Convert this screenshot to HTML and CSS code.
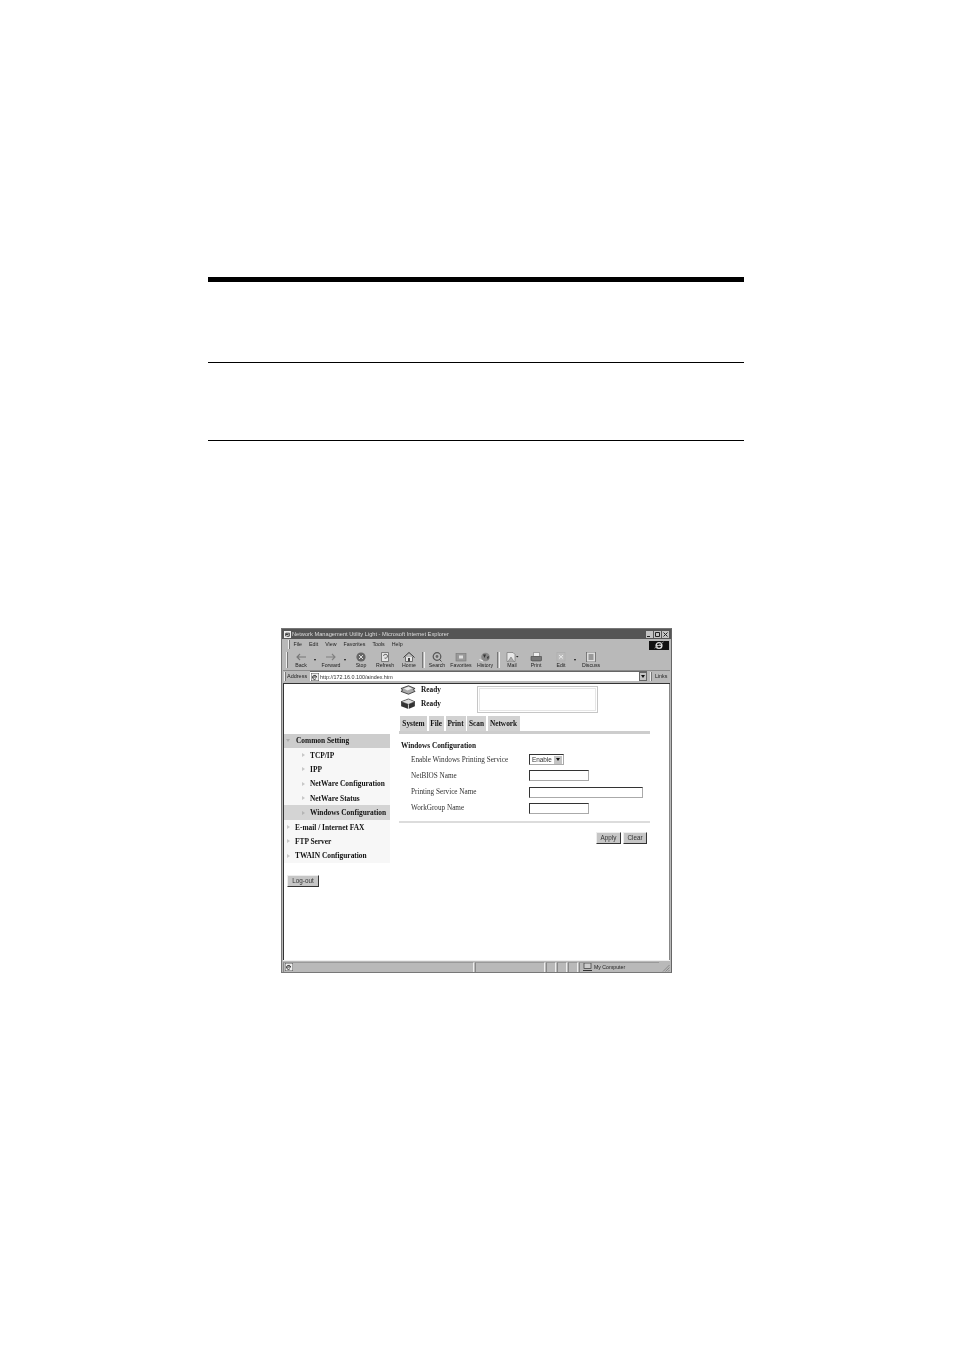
FILE: index.html
```html
<!DOCTYPE html>
<html lang="en">
<head>
<meta charset="utf-8">
<title>Windows Configuration</title>
<link rel="stylesheet" href="styles.css">
</head>
<body>
<main class="page">
  <div class="rule-thick"></div>
  <div class="rule rule-a"></div>
  <div class="rule rule-b"></div>

  <section class="window">
    <header class="titlebar">
      <svg class="ti" viewBox="0 0 8 8"><rect width="8" height="8" fill="#eee"/><path d="M2 6V2.5h3.5M2 4h3M6 2v4H3" stroke="#222" fill="none"/></svg>
      <span class="title-text">Network Management Utility Light - Microsoft Internet Explorer</span>
      <span class="wbtns">
        <span class="wbtn"><svg viewBox="0 0 7 7"><path d="M1 5.500h3" stroke="#222"/></svg></span>
        <span class="wbtn"><svg viewBox="0 0 7 7"><path d="M1.500 1.500h4v4h-4z" fill="none" stroke="#222"/></svg></span>
        <span class="wbtn"><svg viewBox="0 0 7 7"><path d="M1.500 1.500l4 4M5.500 1.500l-4 4" stroke="#222"/></svg></span>
      </span>
    </header>

    <nav class="menubar">
      <span class="grip menu-grip"></span>
      <span>File</span><span>Edit</span><span>View</span><span>Favorites</span><span>Tools</span><span>Help</span>
      <span class="throbber"><svg viewBox="0 0 12 10" width="12" height="9"><circle cx="6" cy="5" r="3.200" fill="none" stroke="#ddd" stroke-width="1.600"/><path d="M3 5h6" stroke="#ddd"/><path d="M1 8C3 7 8 3 11 1" stroke="#999" fill="none"/></svg></span>
    </nav>

    <div class="toolbar">
      <span class="grip tall"></span>
      <span class="tool"><svg viewBox="0 0 14 10"><path d="M12 5H3M6 2 3 5l3 3" fill="none" stroke="#777" stroke-width="1.100"/></svg><b>Back</b></span>
      <i class="drop"></i>
      <span class="tool"><svg viewBox="0 0 14 10"><path d="M2 5h9M8 2l3 3-3 3" fill="none" stroke="#808080" stroke-width="1.100"/></svg><b>Forward</b></span>
      <i class="drop"></i>
      <span class="tool"><svg viewBox="0 0 14 10"><circle cx="7" cy="5" r="4.600" fill="#666"/><path d="M5 3l4 4M9 3 5 7" stroke="#ddd"/></svg><b>Stop</b></span>
      <span class="tool"><svg viewBox="0 0 14 10"><path d="M3.500.5h7v9h-7z" fill="#e4e4e4" stroke="#666" stroke-width=".8"/><path d="M5.500 4a2 2 0 1 1 1 2" fill="none" stroke="#666"/></svg><b>Refresh</b></span>
      <span class="tool"><svg viewBox="0 0 14 10"><path d="M1.500 5.500 7 .5l5.500 5" fill="none" stroke="#333"/><path d="M3.500 5v4.500h7V5" fill="#e4e4e4" stroke="#555" stroke-width=".8"/><rect x="6" y="6" width="2" height="3.500" fill="#444"/></svg><b>Home</b></span>
      <span class="sep sep-first"></span>
      <span class="tool"><svg viewBox="0 0 14 10"><circle cx="7" cy="4.500" r="3.800" fill="#bbb" stroke="#555" stroke-width="1.200"/><circle cx="7" cy="4.500" r="1.400" fill="#666"/><path d="M9.500 7.500l2 2" stroke="#444"/></svg><b>Search</b></span>
      <span class="tool"><svg viewBox="0 0 14 10"><rect x="2" y="1.500" width="10" height="7.500" fill="#999" stroke="#777" stroke-width=".6"/><rect x="5" y="3.500" width="4" height="3" fill="#ddd"/></svg><b>Favorites</b></span>
      <span class="tool"><svg viewBox="0 0 14 10"><circle cx="7.500" cy="5" r="4.300" fill="#888"/><path d="M5 2.500h3L6.500 6zM9 5l2-1-1 4z" fill="#333"/><path d="M1.500 7.500 5 9" stroke="#eee"/></svg><b>History</b></span>
      <span class="sep"></span>
      <span class="tool"><svg viewBox="0 0 14 10"><path d="M2 .5h6l2 2v7H2z" fill="#e8e8e8" stroke="#777" stroke-width=".7"/><path d="M3 9.500 6 5l3 4.500" fill="#aaa" stroke="#666" stroke-width=".5"/><path d="M11 4h2.500l-1.200 1.500z" fill="#222"/></svg><b>Mail</b></span>
      <span class="tool"><svg viewBox="0 0 14 10"><path d="M4.500.5h6v4h-6z" fill="#eee" stroke="#777" stroke-width=".6"/><path d="M2 4.500h10.500v4H2z" fill="#777" stroke="#444" stroke-width=".6"/><path d="M3 9.500h9" stroke="#999"/></svg><b>Print</b></span>
      <span class="tool tool-edit"><svg viewBox="0 0 14 10"><rect x="3" y=".5" width="8" height="8.500" fill="#bbb" stroke="#aaa" stroke-width=".6"/><path d="M5 3l4 3.500M9 3 5 6.500" stroke="#eee"/></svg><b>Edit</b></span>
      <i class="drop"></i>
      <span class="tool"><svg viewBox="0 0 14 10"><rect x="2.500" y="0" width="9" height="10" fill="#ddd" stroke="#666" stroke-width=".8"/><rect x="4.500" y="2" width="5" height="6" fill="#999"/></svg><b>Discuss</b></span>
    </div>

    <div class="addressbar">
      <span class="grip"></span>
      <span class="addr-label">Address</span>
      <span class="addr-field">
        <svg class="page-ico" viewBox="0 0 8 8"><rect width="8" height="8" fill="#eee" stroke="#333" stroke-width=".8"/><path d="M2 4h4M5.500 4a2 2 0 1 0-.6 1.800" stroke="#111" fill="none" stroke-width=".8"/></svg>
        <span class="addr-url">http://172.16.0.100/aindex.htm</span>
        <span class="scroll-btn"></span>
      </span>
      <span class="grip links-grip"></span>
      <span class="links">Links</span>
    </div>

    <div class="content">
      <aside class="sidebar">
        <ul class="tree">
          <li class="node head"><i class="tri down"></i>Common Setting</li>
          <li class="node sub"><i class="tri"></i>TCP/IP</li>
          <li class="node sub"><i class="tri"></i>IPP</li>
          <li class="node sub"><i class="tri"></i>NetWare Configuration</li>
          <li class="node sub"><i class="tri"></i>NetWare Status</li>
          <li class="node sub active"><i class="tri"></i>Windows Configuration</li>
          <li class="node"><i class="tri"></i>E-mail / Internet FAX</li>
          <li class="node"><i class="tri"></i>FTP Server</li>
          <li class="node"><i class="tri"></i>TWAIN Configuration</li>
        </ul>
        <button class="btn logout" type="button">Log-out</button>
      </aside>

      <div class="main">
        <div class="status">
          <div class="status-lines">
            <div class="ready"><svg viewBox="0 0 17 10"><path d="M1 4 9 1l7 3-2 1 2 2-7 3-8-3 2-1.500z" fill="#aaa" stroke="#222" stroke-width=".8"/><path d="M4 4l5-2 4 2-5 2z" fill="#eee"/></svg>Ready</div>
            <div class="ready"><svg viewBox="0 0 17 12"><path d="M1 4 9 1l7 3v5l-7 3-8-3z" fill="#333"/><path d="M1 4 9 1l7 3-7 3z" fill="#ddd" stroke="#222" stroke-width=".6"/><path d="M9 7v5" stroke="#ddd"/></svg>Ready</div>
          </div>
          <div class="msgbox"></div>
        </div>

        <div class="tabs">
          <span class="tab">System</span><span class="tab">File</span><span class="tab">Print</span><span class="tab">Scan</span><span class="tab">Network</span>
        </div>

        <h2 class="section-title">Windows Configuration</h2>
        <form class="form">
          <div class="row"><label>Enable Windows Printing Service</label><span class="select">Enable<i class="select-arrow"></i></span></div>
          <div class="row"><label>NetBIOS Name</label><span class="input short"></span></div>
          <div class="row"><label>Printing Service Name</label><span class="input long"></span></div>
          <div class="row"><label>WorkGroup Name</label><span class="input short"></span></div>
        </form>
        <div class="divider"></div>
        <div class="actions">
          <button class="btn apply" type="button">Apply</button>
          <button class="btn clear" type="button">Clear</button>
        </div>
      </div>
    </div>

    <footer class="statusbar">
      <span class="sb sb-main"><svg class="page-ico" viewBox="0 0 8 8"><rect width="8" height="8" fill="#eee" stroke="#333" stroke-width=".8"/><path d="M2 4h4M5.500 4a2 2 0 1 0-.6 1.800" stroke="#111" fill="none" stroke-width=".8"/></svg></span>
      <span class="sb sb-2"></span><span class="sb sb-3"></span><span class="sb sb-3"></span><span class="sb sb-3"></span>
      <span class="sb sb-zone"><svg viewBox="0 0 9 8" width="9" height="8"><rect x="1" y="0" width="7" height="5.500" fill="#ccc" stroke="#333" stroke-width=".7"/><path d="M0 7.500h9" stroke="#333"/></svg>My Computer</span>
      <svg class="resize" viewBox="0 0 8 8"><path d="M7.500 1 1 7.500M7.500 3.500 3.500 7.500M7.500 6 6 7.500" stroke="#888" fill="none"/></svg>
    </footer>
  </section>
</main>
</body>
</html>
```

FILE: styles.css
```css
* { box-sizing: border-box; }
html, body { margin: 0; padding: 0; background: #fff; }
.page {
  width: 954px;
  height: 1348px;
  padding-top: 277px;
  display: flex;
  flex-direction: column;
  overflow: hidden;
}
.rule-thick { width: 536px; height: 5px; margin-left: 208px; background: #000; }
.rule { width: 536px; height: 1px; margin-left: 208px; background: #000; }
.rule-a { margin-top: 80px; }
.rule-b { margin-top: 77px; }

.window {
  width: 391px;
  height: 345px;
  margin: 187px 0 0 281px;
  border: 1px solid #777;
  border-right-color: #666;
  background: #b9b9b9;
  padding: 0 1px;
  display: flex;
  flex-direction: column;
  font-family: "Liberation Sans", Arial, sans-serif;
  color: #222;
  filter: grayscale(1) blur(.4px);
}
.titlebar {
  height: 10px;
  flex: none;
  margin: 0 -1px;
  background: #555;
  display: flex;
  align-items: center;
  padding: 0 2px;
  gap: 1px;
}
.ti { width: 7px; height: 7px; flex: none; }
.title-text { font-size: 5.700px; color: #ddd; white-space: nowrap; }
.wbtns { margin-left: auto; display: flex; }
.wbtn {
  width: 7px;
  height: 7px;
  margin-left: 1px;
  background: #c4c4c4;
  display: block;
}
.wbtn svg { width: 7px; height: 7px; display: block; }
.menubar {
  height: 11px;
  flex: none;
  display: flex;
  align-items: center;
  gap: 7px;
  font-size: 5.300px;
  padding-left: 5px;
}
.menubar > span:not(.throbber):not(.grip) { position: relative; top: -1px; }
.grip { width: 2px; height: 9px; flex: none; border-left: 1px solid #eee; border-right: 1px solid #777; }
.menu-grip { margin-right: -3.500px; }
.grip.tall { height: 16px; margin: 0 1px 0 2px; }
.throbber {
  margin-left: auto;
  margin-right: 1px;
  align-self: flex-end;
  width: 20px;
  height: 9px;
  background: #111;
  display: flex;
  justify-content: center;
}
.toolbar {
  height: 21px;
  flex: none;
  display: flex;
  align-items: center;
  padding-left: 1px;
  border-bottom: 1px solid #8a8a8a;
}
.tool {
  width: 24px;
  flex: none;
  display: flex;
  flex-direction: column;
  align-items: center;
}
.tool-edit { margin-left: 1px; }
.tool svg { width: 14px; height: 10px; display: block; }
.tool b { font-weight: 400; font-size: 5.200px; line-height: 7px; white-space: nowrap; }
.drop { width: 6px; height: 2px; flex: none; position: relative; }
.drop::after { content: ""; position: absolute; left: 1px; top: 0; border: 1.500px solid transparent; border-top: 2px solid #111; border-bottom: 0; }
.sep { width: 3px; height: 16px; flex: none; border-left: 1px solid #777; border-right: 1px solid #eee; }
.sep-first { margin-left: 1px; }
.addressbar {
  height: 13px;
  flex: none;
  display: flex;
  align-items: center;
  padding: 0 0 2px 1px;
  font-size: 5.500px;
  border-bottom: 1px solid #333;
}
.addr-label { width: 24px; padding-left: 1px; flex: none; }
.addr-field {
  width: 337px;
  height: 10px;
  flex: none;
  background: #fff;
  display: flex;
  align-items: center;
  gap: 1px;
  border-top: 1px solid #666;
}
.page-ico { width: 8px; height: 8px; flex: none; margin-left: 1px; }
.addr-url { font-size: 5.400px; color: #333; white-space: nowrap; }
.scroll-btn {
  margin-left: auto;
  width: 8px;
  height: 9px;
  background: #c4c4c4;
  border: 1px solid #666;
  position: relative;
}
.scroll-btn::after { content: ""; position: absolute; left: 1px; top: 2px; border: 2px solid transparent; border-top: 3px solid #111; border-bottom: 0; }
.links-grip { margin-left: 3px; }
.links { margin-left: 3px; font-size: 5.300px; }
.content {
  height: 276px;
  flex: none;
  background: #fff;
  border-left: 1px solid #333;
  border-right: 1px solid #888;
  display: flex;
  font-family: "Liberation Serif", "Times New Roman", serif;
  color: #111;
}
.sidebar { width: 106px; flex: none; padding-top: 49.500px; }
.tree { list-style: none; margin: 0; padding: 0; }
.node {
  height: 14.400px;
  display: flex;
  align-items: center;
  gap: 5px;
  padding-left: 3px;
  background: #f7f7f7;
  font-size: 7.400px;
  font-weight: 700;
  white-space: nowrap;
}
.node.head { background: #cdcdcd; padding-left: 2px; gap: 6px; }
.node.sub { padding-left: 18px; }
.node.active { background: #d4d4d4; }
.tri {
  width: 0;
  height: 0;
  flex: none;
  border: 2px solid transparent;
  border-left: 3px solid #c8c8c8;
  border-right: 0;
}
.node.active .tri { border-left-color: #b4b4b4; }
.tri.down { border: 2.500px solid transparent; border-top: 3px solid #aaa; border-bottom: 0; }
.btn {
  display: block;
  padding: 0;
  background: #c6c6c6;
  border: 1px solid;
  border-color: #eee #333 #333 #eee;
  font-family: "Liberation Sans", Arial, sans-serif;
  font-size: 6.300px;
  color: #333;
  height: 12px;
}
.logout { width: 32px; margin: 11.500px 0 0 3px; }
.main { flex: 1; padding: 0 0 0 9px; min-width: 0; }
.status { display: flex; height: 31px; padding-top: 2px; }
.status-lines { width: 78px; flex: none; margin-top: -4px; }
.ready {
  height: 14px;
  display: flex;
  align-items: center;
  gap: 5px;
  padding-left: 1px;
  font-size: 7.300px;
  font-weight: 700;
}
.ready svg { width: 16px; height: 11px; flex: none; }
.msgbox {
  width: 121px;
  height: 27px;
  border: 1px solid #c6c6c6;
  outline: 1px solid #e6e6e6;
  outline-offset: -3px;
}
.tabs {
  display: grid;
  grid-template-columns: 27px 15.500px 20px 19px 32px;
  gap: 1.500px;
  width: 251px;
  border-bottom: 3px solid #cdcdcd;
  height: 18px;
  margin-top: 1px;
  padding-left: 1px;
}
.tab {
  height: 15px;
  background: #d2d2d2;
  font-size: 7.300px;
  font-weight: 700;
  line-height: 15px;
  text-align: center;
  white-space: nowrap;
}
.section-title { margin: 7px 0 0 2px; font-size: 7.300px; line-height: 9px; font-weight: 700; }
.form { margin: 1.700px 0 0 0; padding-left: 12px; }
.row {
  height: 16.200px;
  display: flex;
  align-items: center;
  font-size: 7.200px;
  color: #333;
}
.row label { width: 118px; flex: none; white-space: nowrap; }
.input {
  height: 11px;
  background: #fff;
  border: 1px solid #aaa;
  border-top-color: #333;
  border-left-color: #333;
}
.input.short { width: 60px; }
.input.long { width: 114px; }
.select {
  width: 35px;
  height: 11px;
  display: flex;
  align-items: center;
  justify-content: space-between;
  padding: 0 1px 0 2px;
  background: #fff;
  border: 1px solid #aaa;
  border-top-color: #333;
  border-left-color: #333;
  font-family: "Liberation Sans", Arial, sans-serif;
  font-size: 6.400px;
}
.select-arrow {
  width: 8px;
  height: 8px;
  background: #c4c4c4;
  position: relative;
}
.select-arrow::after { content: ""; position: absolute; left: 1.500px; top: 2.500px; border: 2.500px solid transparent; border-top: 3px solid #111; border-bottom: 0; }
.divider { width: 251px; height: 2px; margin-top: 4.500px; background: #dcdcdc; }
.actions { width: 248px; display: flex; justify-content: flex-end; gap: 2px; margin-top: 9px; }
.apply { width: 25px; }
.clear { width: 24px; }
.statusbar {
  height: 12px;
  flex: none;
  display: flex;
  align-items: center;
  gap: 1px;
  font-size: 5.200px;
  border-top: 1px solid #eee;
}
.sb { height: 10px; display: flex; align-items: center; border-left: 1px solid #888; border-top: 1px solid #999; border-right: 1px solid #eee; flex: none; }
.sb-main { width: 191px; }
.sb-2 { width: 70px; }
.sb-3 { width: 10px; }
.sb-zone { width: 80px; gap: 2px; padding-left: 3px; border-right: 0; }
.resize { width: 8px; height: 8px; margin-left: auto; align-self: flex-end; }
```
